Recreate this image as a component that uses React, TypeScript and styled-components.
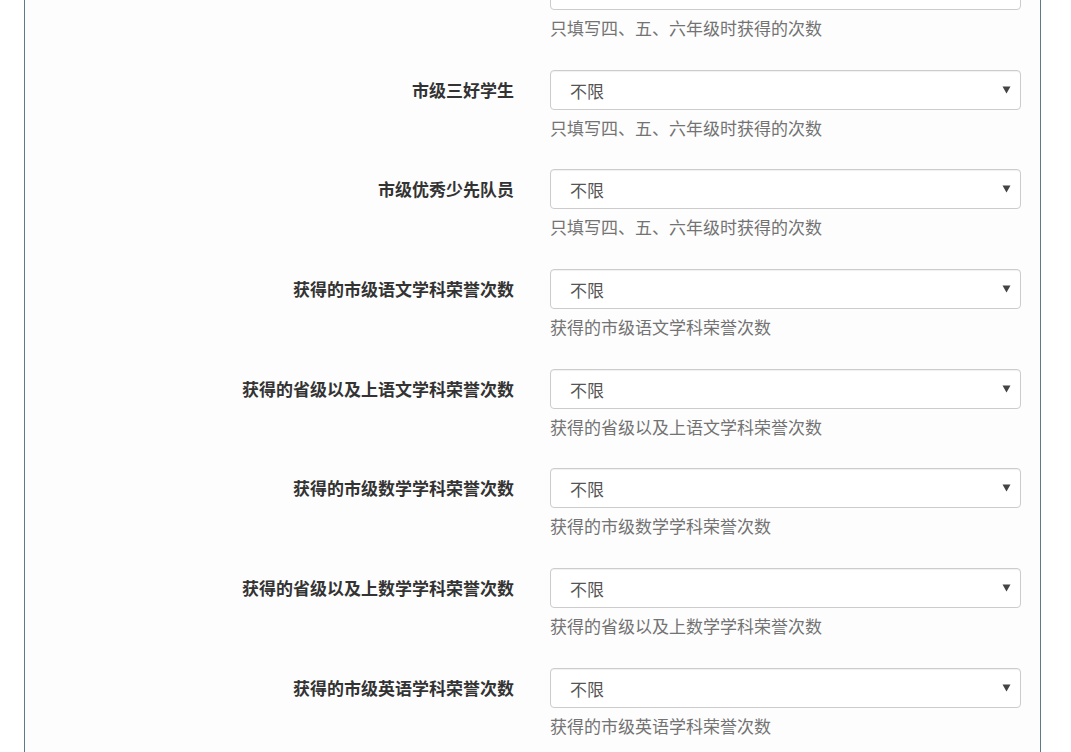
import React from "react";
import styled, { createGlobalStyle } from "styled-components";

interface Field {
  label: string;
  help: string;
}

// the view is scrolled: only the bottom of the first row shows
const fields: Field[] = [
  { label: "", help: "只填写四、五、六年级时获得的次数" },
  { label: "市级三好学生", help: "只填写四、五、六年级时获得的次数" },
  { label: "市级优秀少先队员", help: "只填写四、五、六年级时获得的次数" },
  { label: "获得的市级语文学科荣誉次数", help: "获得的市级语文学科荣誉次数" },
  { label: "获得的省级以及上语文学科荣誉次数", help: "获得的省级以及上语文学科荣誉次数" },
  { label: "获得的市级数学学科荣誉次数", help: "获得的市级数学学科荣誉次数" },
  { label: "获得的省级以及上数学学科荣誉次数", help: "获得的省级以及上数学学科荣誉次数" },
  { label: "获得的市级英语学科荣誉次数", help: "获得的市级英语学科荣誉次数" },
];

function Arrow() {
  return (
    <ArrowIcon width="9" height="8" viewBox="0 0 9 8">
      <path d="M0.5 0.5 L8.5 0.5 L4.5 7.5 Z" fill="#444" />
    </ArrowIcon>
  );
}

function App() {
  return (
    <>
      <GlobalStyle />
      <Panel>
        <Form>
          {fields.map((field, index) => (
            <Group key={index}>
              <Label>{field.label}</Label>
              <Control>
                <SelectBox>
                  <Select defaultValue="不限">
                    <option value="不限">不限</option>
                    <option value="1">1</option>
                    <option value="2">2</option>
                    <option value="3">3</option>
                  </Select>
                  <Arrow />
                </SelectBox>
                <Help>{field.help}</Help>
              </Control>
            </Group>
          ))}
        </Form>
      </Panel>
    </>
  );
}

const GlobalStyle = createGlobalStyle`
  html, body {
    margin: 0;
    padding: 0;
    background: #fff;
    overflow: hidden;
  }
  body {
    font-family: "Noto Sans CJK SC", "Liberation Sans", sans-serif;
    font-size: 17px;
    color: #333;
  }
`;

const Panel = styled.div`
  margin: -30px 30px 0 24px;
  border-left: 1px solid #5f7a87;
  border-right: 1px solid #5f7a87;
  background: #fdfdfd;
  height: 900px;
`;

const Form = styled.div`
  display: flex;
  flex-direction: column;
  gap: 30.67px;
  padding-right: 19px;
`;

const Group = styled.div`
  display: grid;
  grid-template-columns: 1fr 471px;
  column-gap: 36px;
`;

const Label = styled.label`
  padding-top: 9px;
  font-weight: bold;
  font-size: 17px;
  line-height: 22px;
  color: #333;
  text-align: right;
`;

const Control = styled.div`
  display: flex;
  flex-direction: column;
`;

const SelectBox = styled.div`
  position: relative;
  height: 40px;
`;

const Select = styled.select`
  appearance: none;
  -webkit-appearance: none;
  box-sizing: border-box;
  width: 100%;
  height: 40px;
  padding: 1px 30px 0 19px;
  border: 1px solid #ccc;
  border-radius: 4px;
  background: #fff;
  box-shadow: inset 0 1px 1px rgba(0, 0, 0, 0.06);
  font-family: "Noto Sans CJK SC", "Liberation Sans", sans-serif;
  font-size: 17px;
  color: #555;
  outline: none;
`;

const ArrowIcon = styled.svg`
  position: absolute;
  right: 10px;
  top: 16px;
  pointer-events: none;
`;

const Help = styled.div`
  margin-top: 7px;
  font-size: 17px;
  line-height: 22px;
  color: #737373;
`;

export default App;
